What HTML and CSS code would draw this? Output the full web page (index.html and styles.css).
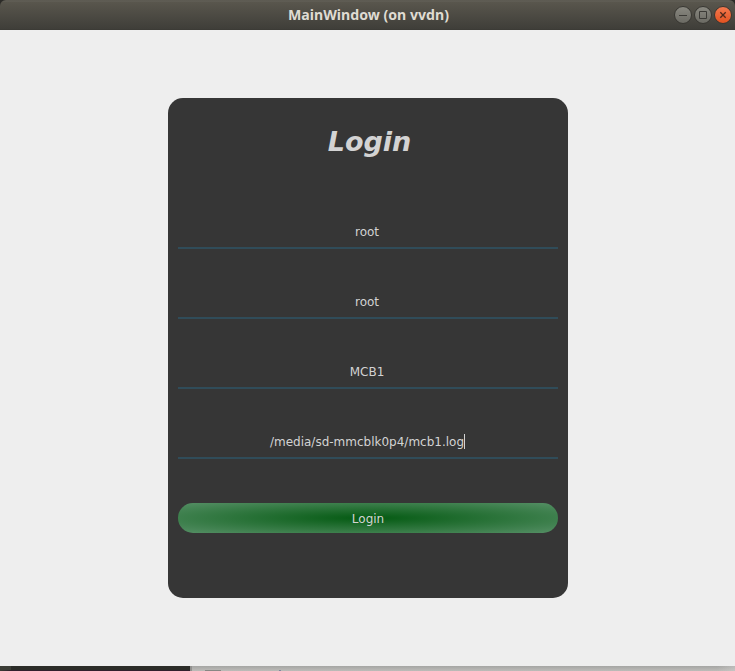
FILE: index.html
```html
<!DOCTYPE html>
<html lang="en">
<head>
<meta charset="utf-8">
<title>MainWindow (on vvdn)</title>
<link rel="stylesheet" href="styles.css">
</head>
<body>
<div class="window">
  <header class="titlebar">
    <svg class="title" width="180" height="30"><text x="18" y="20" textLength="161" lengthAdjust="spacingAndGlyphs">MainWindow (on vvdn)</text></svg>
    <div class="controls">
      <svg class="control" viewBox="0 0 20 20">
        <defs>
          <linearGradient id="grey" x2="0" y2="1"><stop stop-color="#8a8981"/><stop offset="1" stop-color="#6a6962"/></linearGradient>
          <linearGradient id="orange" x2="0" y2="1"><stop stop-color="#f47a50"/><stop offset="1" stop-color="#e2511f"/></linearGradient>
        </defs>
        <circle class="ring" cx="10" cy="10" r="8.5"/><path d="M6 10.5h8"/>
      </svg>
      <svg class="control" viewBox="0 0 20 20"><circle class="ring" cx="10" cy="10" r="8.5"/><path d="M6.5 6.5h7v7h-7z"/></svg>
      <svg class="control close" viewBox="0 0 20 20"><circle class="ring" cx="10" cy="10" r="8.5"/><path d="M7.3 7.3l5.4 5.4M12.7 7.3l-5.4 5.4"/></svg>
    </div>
  </header>
  <main class="content">
    <section class="card">
      <h1>Login</h1>
      <div class="field">root</div>
      <div class="field">root</div>
      <div class="field">MCB1</div>
      <div class="field"><span class="caret">/media/sd-mmcblk0p4/mcb1.log</span></div>
      <div class="button">Login</div>
    </section>
  </main>
</div>
<footer class="desktop"><div class="dock"></div><div class="behind"><i class="tab"></i><i class="mark"></i></div></footer>
</body>
</html>
```
FILE: styles.css
```css
* { box-sizing: border-box; }
body {
  margin: 0;
  width: 735px;
  height: 671px;
  overflow: hidden;
  background: #2c2b28;
  font: 12px/14px "DejaVu Sans", sans-serif;
  color: #d3d3d3;
}
.titlebar {
  display: flex;
  height: 30px;
  border-radius: 6px 6px 0 0;
  background: linear-gradient(#57544b 0, #64625a 1px, #59564d 2px, #3f3e39 29px, #393833 30px);
}
.title {
  margin-left: 270px;
  font: bold 14px "Noto Sans", sans-serif;
  fill: #dfdbd2;
}
.controls { display: flex; margin: 5px 2px 0 auto; }
.control { width: 20px; height: 20px; }
.control path { fill: none; stroke: #3b3a36; stroke-width: 1; }
.ring { fill: url(#grey); stroke: #373631; stroke-width: 1; }
.close .ring { fill: url(#orange); }
.control.close path { stroke: #50291b; stroke-width: 1.3; }
.content {
  height: 636px;
  padding: 68px 167px 0 168px;
  background: #eeeeee;
}
.card {
  width: 400px;
  height: 500px;
  padding: 0 10px;
  border-radius: 15px;
  background: #363636;
  text-align: center;
}
h1 {
  margin: 0;
  height: 109px;
  padding: 28px 0 0 3px;
  font: italic bold 27px/32px "DejaVu Sans", sans-serif;
}
.field {
  height: 42px;
  margin-bottom: 28px;
  padding: 18px 2px 0 0;
  border-bottom: 2px solid #304c59;
}
.field:nth-of-type(4) { margin-bottom: 0; }
.caret { position: relative; }
.caret::after {
  content: "";
  position: absolute;
  right: -1px;
  top: -1px;
  width: 1px;
  height: 15px;
  background: #d3d3d3;
}
.button {
  height: 30px;
  margin-top: 44px;
  padding-top: 9px;
  border-radius: 15px;
  background: radial-gradient(ellipse 269px 21.2px at center, #045a12, #558f65);
}
.desktop { display: flex; height: 5px; }
.dock {
  width: 190px;
  border-left: 11px solid #3b3d36;
  border-bottom: 1px solid #30202c;
  background: #2b2c28;
}
.behind {
  flex: 1;
  display: flex;
  align-items: flex-end;
  border-left: 2px solid #92918f;
  background: linear-gradient(90deg, transparent 525px, #d0cfcd80), linear-gradient(#a5a5a3, #bdbcb9);
}
.tab { width: 16px; height: 1px; margin-left: 13px; background: #888784; }
.mark { width: 2px; height: 1px; margin-left: 58px; background: #8286a0; }
```
